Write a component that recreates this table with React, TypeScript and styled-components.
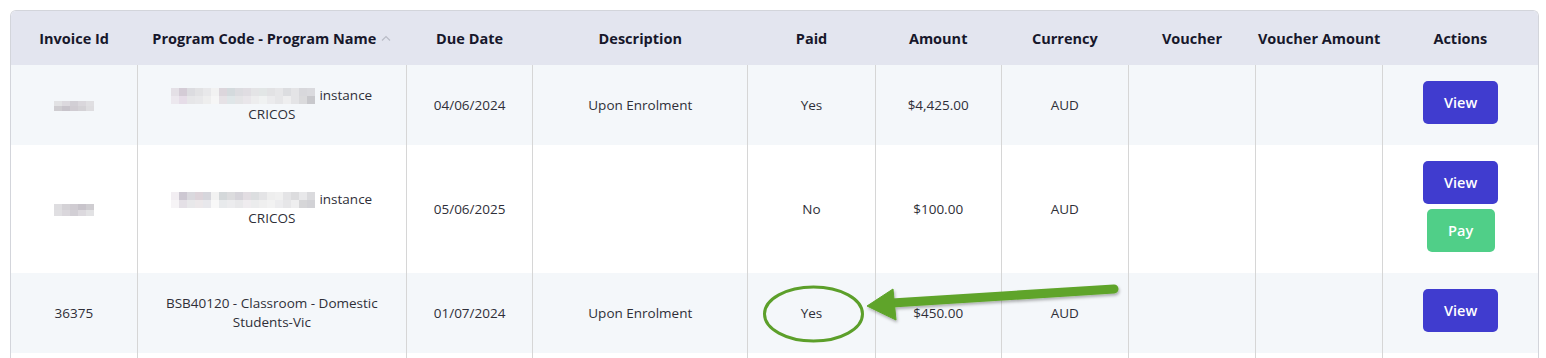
import React from "react";
import styled, { createGlobalStyle } from "styled-components";

const Global = createGlobalStyle`
  html, body { margin: 0; padding: 0; background: #fff; overflow: hidden; }
  body { font-family: "Open Sans", "Liberation Sans", sans-serif; }
`;

const Page = styled.div`
  position: relative;
  width: 1546px;
  height: 358px;
  padding: 10px 0 0 10px;
  box-sizing: border-box;
`;

const Frame = styled.div`
  width: 1527px;
  border: 1px solid #d3d5db;
  border-bottom: none;
  border-radius: 6px 6px 0 0;
  overflow: hidden;
`;

const Table = styled.table`
  width: 100%;
  border-collapse: collapse;
  table-layout: fixed;
`;

const Th = styled.th`
  height: 54px;
  padding: 0 2px;
  background: #e3e5ef;
  color: #17172b;
  font-size: 14.5px;
  font-weight: 700;
  text-align: center;
  white-space: nowrap;
`;

const Row = styled.tr<{ $shade: boolean }>`
  background: ${(p) => (p.$shade ? "#f4f7fa" : "#ffffff")};
`;

const Td = styled.td<{ $h?: number; $actions?: boolean }>`
  height: ${(p) => (p.$h ? `${p.$h}px` : "auto")};
  box-sizing: border-box;
  padding: ${(p) => (p.$actions ? "16px 10px 21px" : "16px 8px")};
  border-left: 1px solid #d6d6d6;
  color: #2f2f38;
  font-size: 13.5px;
  line-height: 19px;
  text-align: center;
  vertical-align: middle;
  &:first-child { border-left: none; }
`;

const Actions = styled.div`
  display: flex;
  flex-direction: column;
  align-items: center;
  gap: 5px;
`;

const Btn = styled.button<{ $kind: "view" | "pay" }>`
  height: 43px;
  width: ${(p) => (p.$kind === "view" ? "75px" : "68px")};
  border: none;
  border-radius: 5px;
  background: ${(p) => (p.$kind === "view" ? "#403ccf" : "#50cf88")};
  color: #ffffff;
  font-family: inherit;
  font-size: 14.5px;
  font-weight: 600;
  cursor: pointer;
`;

const SortIcon = styled.svg`
  margin-left: 5px;
  vertical-align: 2px;
`;

const Mosaic = styled.span<{ $cols: number; $rows: number; $tw: number; $th: number }>`
  display: inline-grid;
  grid-template-columns: repeat(${(p) => p.$cols}, ${(p) => p.$tw}px);
  grid-template-rows: repeat(${(p) => p.$rows}, ${(p) => p.$th}px);
  vertical-align: middle;
  filter: blur(0.5px);
`;

const Tile = styled.span<{ $c: string }>`
  background: ${(p) => p.$c};
`;

const NameLine = styled.div`
  display: flex;
  align-items: center;
  justify-content: center;
  gap: 4px;
`;

const Overlay = styled.svg`
  position: absolute;
  left: 0;
  top: 0;
  pointer-events: none;
`;

const idTiles = ["#e2e2e4", "#dcd9de", "#d2cfd5", "#dad7dc", "#e0dfe2", "#cfcdd1", "#c8c4cb", "#d0ccd2", "#d4d2d6", "#dedde0"];
const nameTiles1 = [
  "#e4e0e6", "#d4ccd6", "#dcdce0", "#e2e2e4", "#e8e8ea", "#f2f2f2", "#dcd6dc", "#d4dadd", "#dcdce0", "#e0dde2", "#e4e4e6", "#e2e6e6", "#e2e2e4", "#e6e6e8", "#dcdde0", "#e4e4e6", "#d8d8dc", "#dadade",
  "#ece8ee", "#e6dde8", "#e6e6e8", "#e8e8ea", "#eeeeee", "#f6f6f6", "#e6e2e6", "#dfe6e8", "#e4e4e6", "#e9e6ea", "#ededee", "#f0f2f2", "#ebebed", "#e6e6e8", "#eeeeef", "#e4e4e6", "#dadadc", "#c8c8cc",
];
const nameTiles2 = [
  "#f2eef2", "#cdc8d2", "#dad9de", "#ddd4da", "#d6d6dc", "#f2f2f2", "#d4d8da", "#dcdcde", "#d6d4da", "#e2dde2", "#dcdee0", "#e4e4e6", "#eeeeee", "#f0f0f0", "#e4e4e6", "#dcdcde", "#e8e8ea", "#dadadd",
  "#f6f4f6", "#e4e0e6", "#e8e8ea", "#ece8ea", "#e8e8ec", "#f8f8f8", "#e8eaec", "#ececee", "#e8e8ea", "#efecef", "#ebeced", "#efefef", "#f2f2f2", "#ececee", "#e6e6e8", "#eeeeef", "#d6d6d8", "#d2d2d6",
];

const Blur = ({ tiles, cols, rows, tw, th }: { tiles: string[]; cols: number; rows: number; tw: number; th: number }) => (
  <Mosaic $cols={cols} $rows={rows} $tw={tw} $th={th}>
    {tiles.map((c, i) => (
      <Tile key={i} $c={c} />
    ))}
  </Mosaic>
);

const cols = [126, 269, 126, 215, 127, 126, 127, 127, 127, 155];
const headers = [
  "Invoice Id",
  "Program Code - Program Name",
  "Due Date",
  "Description",
  "Paid",
  "Amount",
  "Currency",
  "Voucher",
  "Voucher Amount",
  "Actions",
];

export default function App() {
  return (
    <Page>
      <Global />
      <Frame>
        <Table>
          <colgroup>
            {cols.map((w, i) => (
              <col key={i} style={{ width: w }} />
            ))}
          </colgroup>
          <thead>
            <tr>
              {headers.map((h, i) => (
                <Th key={h}>
                  {h}
                  {i === 1 && (
                    <SortIcon width="10" height="7" viewBox="0 0 10 7">
                      <path d="M1 5.5 L5 1.5 L9 5.5" fill="none" stroke="#b9bcc6" strokeWidth="1.2" />
                    </SortIcon>
                  )}
                </Th>
              ))}
            </tr>
          </thead>
          <tbody>
            <Row $shade>
              <Td $h={80}>
                <Blur tiles={idTiles} cols={5} rows={2} tw={8} th={5} />
              </Td>
              <Td $h={80}>
                <NameLine>
                  <Blur tiles={nameTiles1} cols={18} rows={2} tw={8} th={8} />
                  <span>instance</span>
                </NameLine>
                <div>CRICOS</div>
              </Td>
              <Td $h={80}>04/06/2024</Td>
              <Td $h={80}>Upon Enrolment</Td>
              <Td $h={80}>Yes</Td>
              <Td $h={80}>$4,425.00</Td>
              <Td $h={80}>AUD</Td>
              <Td $h={80} />
              <Td $h={80} />
              <Td $h={80} $actions>
                <Actions>
                  <Btn $kind="view">View</Btn>
                </Actions>
              </Td>
            </Row>
            <Row $shade={false}>
              <Td>
                <Blur tiles={idTiles.slice().reverse()} cols={5} rows={2} tw={8} th={6} />
              </Td>
              <Td>
                <NameLine>
                  <Blur tiles={nameTiles2} cols={18} rows={2} tw={8} th={8} />
                  <span>instance</span>
                </NameLine>
                <div>CRICOS</div>
              </Td>
              <Td>05/06/2025</Td>
              <Td />
              <Td>No</Td>
              <Td>$100.00</Td>
              <Td>AUD</Td>
              <Td />
              <Td />
              <Td $actions>
                <Actions>
                  <Btn $kind="view">View</Btn>
                  <Btn $kind="pay">Pay</Btn>
                </Actions>
              </Td>
            </Row>
            <Row $shade>
              <Td $h={80}>36375</Td>
              <Td $h={80}>BSB40120 - Classroom - Domestic Students-Vic</Td>
              <Td $h={80}>01/07/2024</Td>
              <Td $h={80}>Upon Enrolment</Td>
              <Td $h={80}>Yes</Td>
              <Td $h={80}>$450.00</Td>
              <Td $h={80}>AUD</Td>
              <Td $h={80} />
              <Td $h={80} />
              <Td $h={80} $actions>
                <Actions>
                  <Btn $kind="view">View</Btn>
                </Actions>
              </Td>
            </Row>
            <Row $shade={false}>
              {cols.map((_, i) => (
                <Td key={i} $h={80} />
              ))}
            </Row>
          </tbody>
        </Table>
      </Frame>
      <Overlay width="1546" height="358" viewBox="0 0 1546 358">
        <defs>
          <filter id="sh" x="-10%" y="-50%" width="120%" height="200%">
            <feDropShadow dx="1" dy="2" stdDeviation="1.5" floodColor="#000" floodOpacity="0.3" />
          </filter>
        </defs>
        <ellipse cx="813.5" cy="314" rx="49" ry="27" fill="none" stroke="#5c9f2a" strokeWidth="3" />
        <g filter="url(#sh)" fill="#5ea42a" stroke="#5ea42a">
          <line x1="1114" y1="289" x2="892" y2="303" strokeWidth="9" strokeLinecap="round" />
          <polygon points="867,306 893,289 896,320" strokeWidth="1" strokeLinejoin="round" />
        </g>
      </Overlay>
    </Page>
  );
}
